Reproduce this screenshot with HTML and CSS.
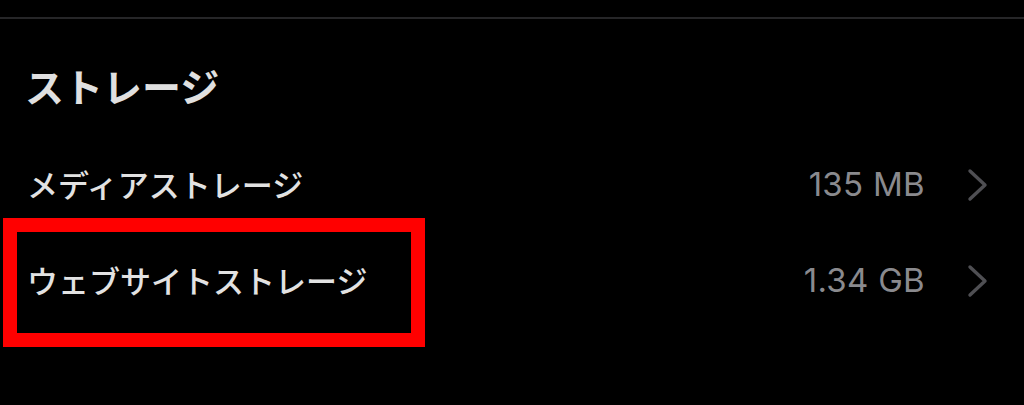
FILE: index.html
```html
<!DOCTYPE html>
<html lang="ja">
<head>
<meta charset="utf-8">
<link rel="stylesheet" href="styles.css">
</head>
<body>
<div class="page">
  <div class="divider"></div>
  <h2 class="heading">ストレージ</h2>
  <div class="list">
    <div class="row">
      <span class="label">メディアストレージ</span>
      <span class="value">135 MB</span>
      <svg class="chev" width="22" height="34" viewBox="0 0 22 34"><polyline points="3,3 18,17 3,31" fill="none" stroke="#4f4f53" stroke-width="3.4" stroke-linecap="round" stroke-linejoin="round"/></svg>
    </div>
    <div class="row">
      <span class="label">ウェブサイトストレージ</span>
      <span class="value">1.34 GB</span>
      <svg class="chev" width="22" height="34" viewBox="0 0 22 34"><polyline points="3,3 18,17 3,31" fill="none" stroke="#4f4f53" stroke-width="3.4" stroke-linecap="round" stroke-linejoin="round"/></svg>
    </div>
  </div>
  <div class="highlight"></div>
</div>
</body>
</html>
```

FILE: styles.css
```css
html, body {
  margin: 0;
  padding: 0;
  background: #000;
}
.page {
  position: relative;
  width: 1024px;
  height: 405px;
  overflow: hidden;
  font-family: "Noto Sans CJK JP", "Noto Sans", sans-serif;
  color: #e2e2e2;
}
.divider {
  margin-top: 17px;
  height: 2px;
  background: #262628;
}
.heading {
  margin: 42px 0 0 0;
  padding-left: 25px;
  height: 48px;
  line-height: 48px;
  font-size: 39px;
  font-weight: 700;
  color: #e0e0e0;
}
.list {
  margin-top: 27px;
  padding-left: 27px;
  padding-right: 35px;
}
.row {
  display: flex;
  align-items: center;
  height: 96px;
}
.label {
  flex: 1;
  font-size: 31px;
  font-weight: 500;
  line-height: 40px;
  color: #e2e2e2;
}
.value {
  font-family: "Inter", "Liberation Sans", sans-serif;
  font-size: 33px;
  letter-spacing: 0.3px;
  line-height: 40px;
  color: #8a8a8e;
  margin-right: 42px;
}
.chev {
  display: block;
  margin-top: 2px;
}
.highlight {
  position: absolute;
  left: 3px;
  top: 218px;
  width: 394px;
  height: 101px;
  border: 14px solid #ff0000;
}
```
